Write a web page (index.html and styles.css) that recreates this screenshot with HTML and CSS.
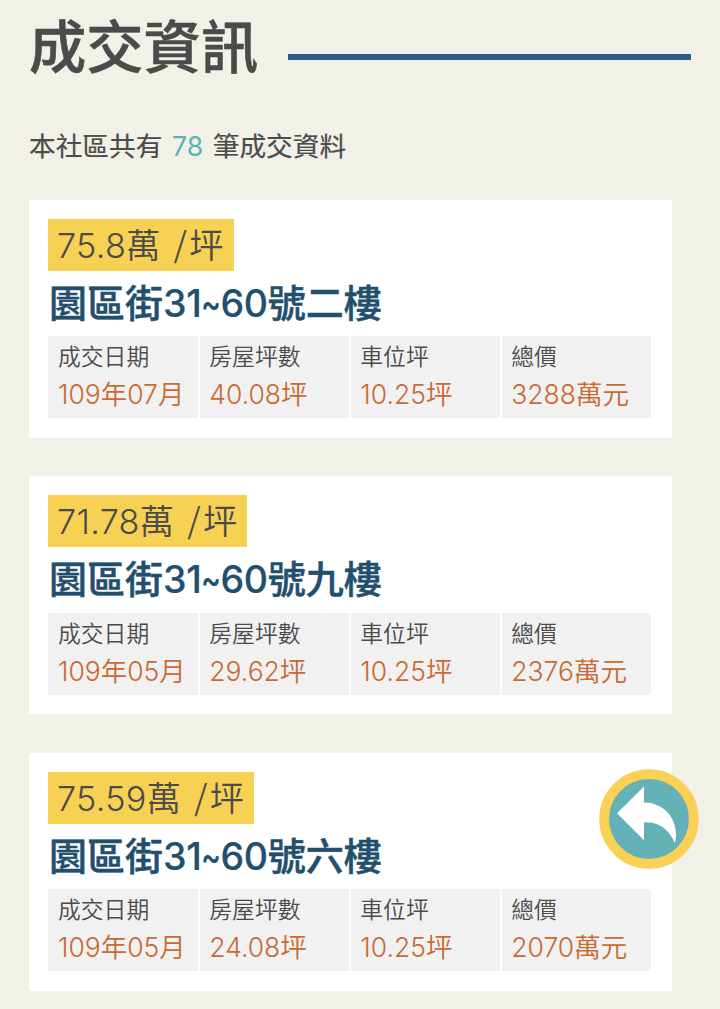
FILE: index.html
```html
<!DOCTYPE html>
<html lang="zh-Hant">
<head>
<meta charset="utf-8">
<title>成交資訊</title>
<link rel="stylesheet" href="styles.css">
</head>
<body>
<header class="heading"><h1 class="heading-text">成交資訊</h1><span class="heading-line"></span></header>
<p class="summary">本社區共有 <span class="count">78</span> 筆成交資料</p>
<main class="deals">
  <article class="card">
    <div class="price">75.8萬 <span class="slash">/</span>坪</div>
    <h2 class="address">園區街<span class="range">31<span class="tilde">~</span>60</span>號二樓</h2>
    <dl class="details">
      <div class="cell"><dt>成交日期</dt><dd>109年07月</dd></div>
      <div class="cell"><dt>房屋坪數</dt><dd>40.08坪</dd></div>
      <div class="cell"><dt>車位坪</dt><dd>10.25坪</dd></div>
      <div class="cell"><dt>總價</dt><dd>3288萬元</dd></div>
    </dl>
  </article>
  <article class="card">
    <div class="price">71.78萬 <span class="slash">/</span>坪</div>
    <h2 class="address">園區街<span class="range">31<span class="tilde">~</span>60</span>號九樓</h2>
    <dl class="details">
      <div class="cell"><dt>成交日期</dt><dd>109年05月</dd></div>
      <div class="cell"><dt>房屋坪數</dt><dd>29.62坪</dd></div>
      <div class="cell"><dt>車位坪</dt><dd>10.25坪</dd></div>
      <div class="cell"><dt>總價</dt><dd>2376萬元</dd></div>
    </dl>
  </article>
  <article class="card">
    <div class="price">75.59萬 <span class="slash">/</span>坪</div>
    <h2 class="address">園區街<span class="range">31<span class="tilde">~</span>60</span>號六樓</h2>
    <dl class="details">
      <div class="cell"><dt>成交日期</dt><dd>109年05月</dd></div>
      <div class="cell"><dt>房屋坪數</dt><dd>24.08坪</dd></div>
      <div class="cell"><dt>車位坪</dt><dd>10.25坪</dd></div>
      <div class="cell"><dt>總價</dt><dd>2070萬元</dd></div>
    </dl>
  </article>
</main>
<a class="back" aria-label="返回">
  <svg viewBox="0 0 100 100" width="100" height="100">
    <circle cx="50" cy="50" r="44.8" fill="#65b1b8" stroke="#f9d156" stroke-width="9.8"/>
    <path d="M18 44.300 45 17.500V33.600C63 33.600 77 47 77 66Q77 70 75.800 74.300C71 61 59 52 45 53.500V71.300Z" fill="#fff"/>
  </svg>
</a>
</body>
</html>
```

FILE: styles.css
```css
* { box-sizing: border-box; margin: 0; padding: 0; }
body {
  height: 1009px;
  padding: 0 48px 0 29px;
  overflow: hidden;
  background: #f2f1e8;
  color: #4b4b4b;
  font-family: Inter, "Noto Sans CJK TC", sans-serif;
}
.heading {
  display: flex;
  align-items: center;
  width: 662px;
  height: 113px;
  gap: 30px;
}
.heading-text {
  width: 229px;
  height: 113px;
  line-height: 94px;
  font-size: 57.3px;
  font-weight: 500;
  -webkit-text-stroke: 0.6px;
  white-space: nowrap;
}
.heading-line { flex: 1; height: 6px; background: #2b5c8a; }
.summary {
  height: 86.7px;
  line-height: 66px;
  font-size: 26.7px;
  font-weight: 400;
  -webkit-text-stroke: 0.2px;
  word-spacing: 2px;
  white-space: nowrap;
}
.count { color: #60b2b8; -webkit-text-stroke: 0; }
.deals { display: flex; flex-direction: column; gap: 38.6px; }
.card { height: 238px; padding: 19px 21px 19px 19px; background: #fff; }
.price {
  width: fit-content;
  height: 52px;
  padding: 0 10px 0 9px;
  line-height: 53px;
  background: #f7d154;
  font-size: 34.2px;
  font-weight: 350;
  letter-spacing: 0.3px;
  word-spacing: 3px;
  white-space: nowrap;
}
.slash { display: inline-block; height: 46px; line-height: 46px; margin-right: 2px; font-family: "Noto Sans CJK TC", sans-serif; vertical-align: top; }
.address {
  height: 65.3px;
  padding-left: 1px;
  line-height: 65px;
  color: #224f6e;
  font-size: 38px;
  font-weight: 500;
  -webkit-text-stroke: 0.5px;
  white-space: nowrap;
}
.range { font-size: 37.5px; letter-spacing: -0.3px; -webkit-text-stroke: 0.2px; }
.tilde { display: inline-block; width: 20px; margin-left: -1px; transform: scaleX(0.8); transform-origin: left; }
.details { display: grid; grid-template-columns: 150px repeat(3, 1fr); gap: 2.3px; height: 82px; }
.cell { padding: 2px 0 0 10px; background: #f1f1f1; white-space: nowrap; }
.cell + .cell { padding-left: 9px; }
dt { height: 37px; line-height: 37px; font-size: 22.8px; font-weight: 350; }
dd { height: 37px; line-height: 38px; color: #c86a32; font-size: 26.5px; font-weight: 350; }
.back { position: fixed; left: 599px; top: 769px; width: 100px; height: 100px; }
.back svg { display: block; }
```
